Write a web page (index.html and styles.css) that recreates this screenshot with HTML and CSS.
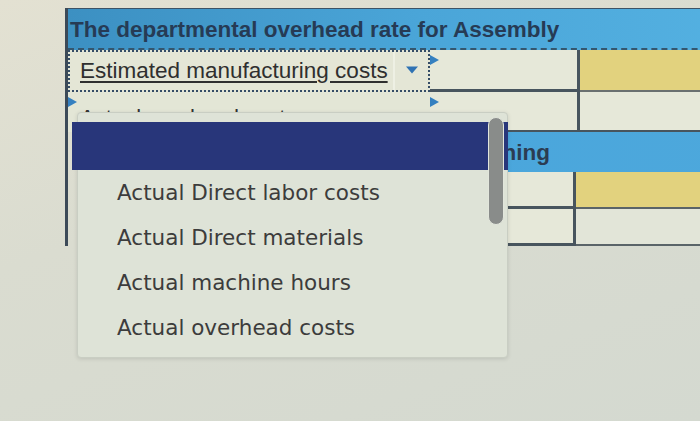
FILE: index.html
```html
<!DOCTYPE html>
<html>
<head>
<meta charset="utf-8">
<link rel="stylesheet" href="styles.css">
</head>
<body>
<div class="screen">
  <div class="sheet">
    <div class="hdr">The departmental overhead rate for Assembly</div>
    <div class="row r2">
      <div class="cell sel">
        <span class="sel-text">Estimated manufacturing costs</span>
        <span class="sel-btn"><svg width="14" height="8" viewBox="0 0 14 8"><path d="M1 0.5 L13 0.5 L7 7.5 Z" fill="#2f72b3"/></svg></span>
      </div>
      <div class="cell c2 mark"></div>
      <div class="cell c3 yellow"></div>
    </div>
    <div class="row r3">
      <div class="cell c1 mark"><span class="ghost">Actual overhead costs</span></div>
      <div class="cell c2 mark"></div>
      <div class="cell c3"></div>
    </div>
    <div class="row r4">
      <div class="blank"></div>
      <div class="hdr2">Finishing</div>
    </div>
    <div class="row r5">
      <div class="blank"></div>
      <div class="cell d1"></div>
      <div class="cell d2 yellow"></div>
    </div>
    <div class="row r6">
      <div class="blank"></div>
      <div class="cell d1"></div>
      <div class="cell d2"></div>
    </div>
  </div>
  <div class="popup">
    <div class="opt hi"></div>
    <div class="opt">Actual Direct labor costs</div>
    <div class="opt">Actual Direct materials</div>
    <div class="opt">Actual machine hours</div>
    <div class="opt">Actual overhead costs</div>
    <div class="scroll"></div>
  </div>
</div>
</body>
</html>
```
FILE: styles.css
```css
html, body {
  margin: 0;
  padding: 0;
}
body {
  width: 700px;
  height: 421px;
  overflow: hidden;
  background: linear-gradient(160deg, #e3e1d2 0%, #dadcd0 40%, #d4d9d0 100%);
  font-family: "Liberation Sans", Arial, sans-serif;
}
.screen {
  position: relative;
  width: 700px;
  height: 421px;
  overflow: hidden;
}
.sheet {
  margin-top: 8px;
  margin-left: 65px;
  width: 700px;
  border-left: 3px solid #3c4a58;
}
.hdr {
  box-sizing: border-box;
  height: 42px;
  border-top: 1px solid #3d5366;
  background: linear-gradient(90deg, #3c90c2 0%, #4aa5d8 50%, #55b2e2 100%);
  color: #263b55;
  font-weight: bold;
  font-size: 22.5px;
  line-height: 42px;
  padding-left: 2px;
  border-bottom: 2px dashed #34566e;
  white-space: nowrap;
}
.row {
  display: grid;
}
.r2, .r3 {
  grid-template-columns: 362px 150px 1fr;
}
.r2 { height: 42px; }
.r3 { height: 40px; }
.cell {
  position: relative;
  box-sizing: border-box;
  background: #e6e8d9;
}
.yellow {
  background: #e2d27e;
}
.sel {
  display: flex;
  border: 2px dotted #344c66;
  background: #e4e6d6;
}
.sel-text {
  flex: 0 0 325px;
  box-sizing: border-box;
  padding-left: 10px;
  font-size: 22.5px;
  line-height: 38px;
  color: #2f2f2f;
  text-decoration: underline;
  text-underline-offset: 3px;
  border-right: 2px solid #eef0e4;
  white-space: nowrap;
}
.sel-btn {
  flex: 1;
  display: flex;
  align-items: center;
  justify-content: center;
  padding-bottom: 2px;
}
.r2 .c2 {
  border-bottom: 3px solid #48555e;
  border-right: 3px solid #48555e;
}
.r2 .c3 {
  border-bottom: 2px solid #6a7070;
}
.r3 .c1 {
  background: #e3e6d6;
  overflow: hidden;
}
.r3 .c2 {
  border-right: 3px solid #48555e;
  border-bottom: 2px solid #48555e;
}
.r3 .c3 {
  border-bottom: 2px solid #48555e;
}
.ghost {
  display: block;
  padding-left: 12px;
  padding-top: 13px;
  font-size: 22px;
  color: #333;
  white-space: nowrap;
}
.mark::before {
  content: "";
  position: absolute;
  left: 0;
  top: 5px;
  border-left: 9px solid #3580c0;
  border-top: 5px solid transparent;
  border-bottom: 5px solid transparent;
}
.r4 {
  grid-template-columns: 362px 1fr;
  height: 40px;
}
.hdr2 {
  background: linear-gradient(90deg, #4aa6dc 0%, #4da8dc 100%);
  color: #2b3c52;
  font-weight: bold;
  font-size: 22.5px;
  line-height: 42px;
  padding-left: 20px;
  border-bottom: 2px solid #4e5a60;
  box-sizing: border-box;
  white-space: nowrap;
}
.blank {
  background: transparent;
}
.r5, .r6 {
  grid-template-columns: 437px 71px 1fr;
  height: 37px;
}
.d1 {
  border-left: 2px solid #55606a;
  border-right: 3px solid #48555e;
  border-bottom: 3px solid #48555e;
}
.d2 {
  border-bottom: 2px solid #5a6468;
}
.r6 .d2 {
  background: #e2e5d8;
}
.popup {
  position: absolute;
  left: 77px;
  top: 112px;
  width: 431px;
  height: 246px;
  box-sizing: border-box;
  background: #dee3d7;
  border: 1px solid #c9cec3;
  border-radius: 4px;
  box-shadow: 0 1px 4px rgba(0, 0, 0, 0.12);
  padding-top: 9px;
}
.opt {
  height: 45px;
  line-height: 45px;
  padding-left: 39px;
  font-family: "DejaVu Sans", Verdana, sans-serif;
  font-size: 21.5px;
  color: #3c3c3c;
  white-space: nowrap;
}
.opt.hi {
  height: 48px;
  margin-left: -6px;
  margin-right: -1px;
  background: #28367a;
}
.scroll {
  position: absolute;
  left: 410px;
  top: 4px;
  width: 14px;
  height: 106px;
  border: 1px solid #e2e6dc;
  border-radius: 8px;
  background: #898c8a;
}
```
